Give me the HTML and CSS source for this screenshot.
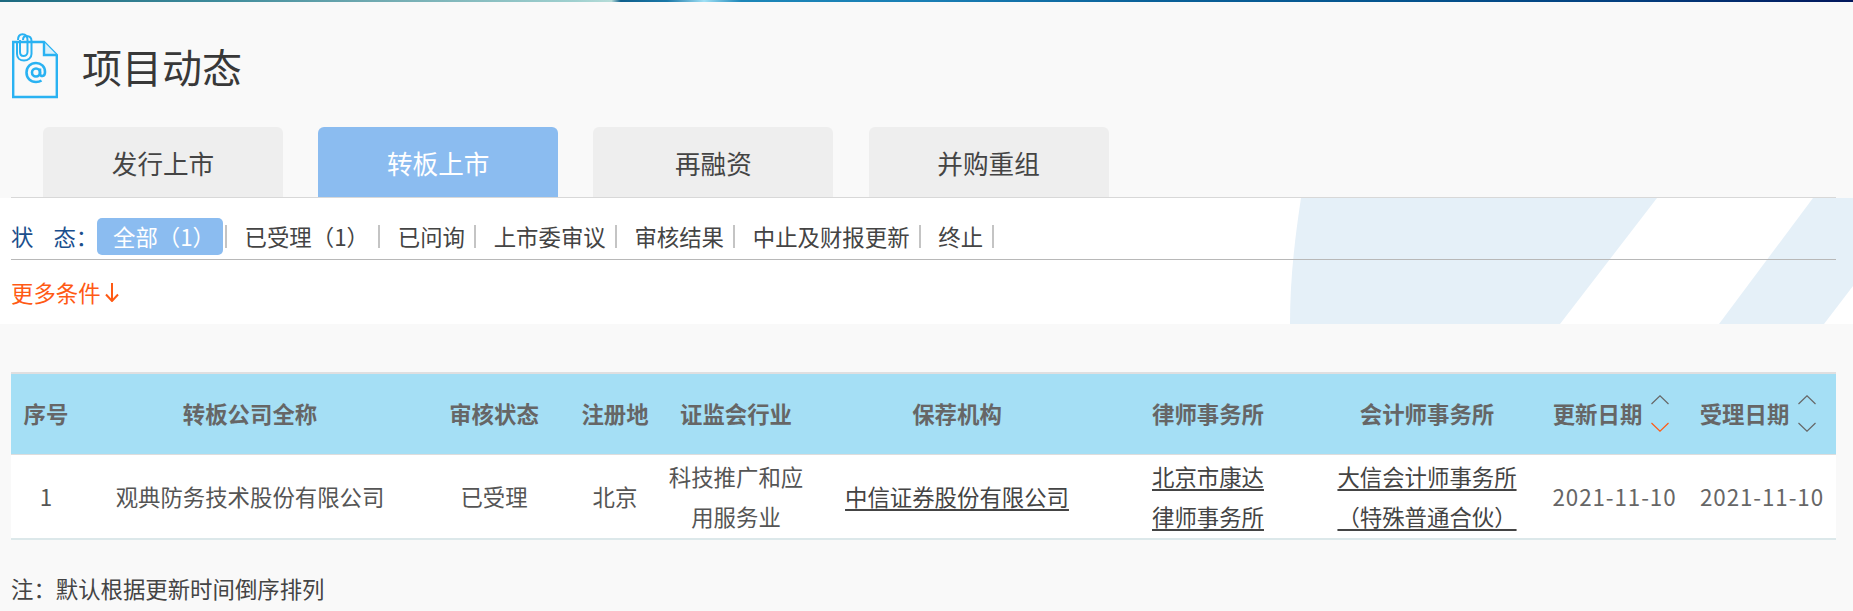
FILE: index.html
```html
<!DOCTYPE html>
<html lang="zh-CN">
<head>
<meta charset="utf-8">
<title>项目动态</title>
<link rel="stylesheet" href="styles.css">
</head>
<body>
<div class="strip"></div>
<header class="head">
  <svg class="head-icon" width="46" height="66" viewBox="0 0 46 66" fill="none" stroke="#29b2f2" stroke-width="2.400">
    <path d="M1.200 9H32L44.800 22V64H1.200Z"/>
    <path d="M32 9V22H44.800" fill="#d9f0fb"/>
    <path d="M6 7C6 3 8 1.200 10.500 1.200C13.500 1.200 15.500 3 15.500 7V19C15.500 21.500 13.500 23 11.500 23C9.500 23 8 21.500 8 19V7" stroke-width="2"/>
    <path d="M11 7C11 4 13 3 14.500 3C17.500 3 19.500 5 19.500 8V21C19.500 25 16 27.500 12 27.500C8 27.500 5 25 5 21V9" stroke-width="2"/>
    <circle cx="24" cy="39.500" r="4" stroke-width="2.600"/>
    <path d="M28 35.500V40.500C28 44 33 44 33 39C33 33.500 29 30 24 30C18.500 30 14.500 34 14.500 39.500C14.500 45 18.500 49 24 49C26 49 28 48.500 29.500 47.500" stroke-width="2.600"/>
  </svg>
  <h1 class="title">项目动态</h1>
</header>
<nav class="tabs">
  <a class="tab">发行上市</a>
  <a class="tab tab-active">转板上市</a>
  <a class="tab">再融资</a>
  <a class="tab">并购重组</a>
</nav>
<section class="panel">
  <svg class="panel-art" width="563" height="126" viewBox="0 0 563 126">
    <path d="M11 0H367L270 126H0C0 80 5 40 11 0Z" fill="#e5f0f8"/>
    <path d="M523 0H563V88L534 126H429Z" fill="#e5f0f8"/>
  </svg>
  <div class="status-row">
    <span class="status-label">状<span class="status-gap"></span>态：</span>
    <a class="pill">全部（1）</a><i class="sep"></i>
    <a class="status">已受理（1）</a><i class="sep"></i>
    <a class="status">已问询</a><i class="sep"></i>
    <a class="status">上市委审议</a><i class="sep"></i>
    <a class="status">审核结果</a><i class="sep"></i>
    <a class="status">中止及财报更新</a><i class="sep"></i>
    <a class="status">终止</a><i class="sep"></i>
  </div>
  <div class="more">更多条件<svg class="more-arrow" width="14" height="19" viewBox="0 0 14 19" fill="none" stroke="#ff5a14" stroke-width="2"><path d="M7 0V18M1 11.500L7 18L13 11.500"/></svg></div>
</section>
<table class="grid">
  <thead>
    <tr>
      <th class="c1">序号</th>
      <th class="c2">转板公司全称</th>
      <th class="c3">审核状态</th>
      <th class="c4">注册地</th>
      <th class="c5">证监会行业</th>
      <th class="c6">保荐机构</th>
      <th class="c7">律师事务所</th>
      <th class="c8">会计师事务所</th>
      <th class="c9"><span class="sort-head">更新日期<svg class="sort" width="18" height="37" viewBox="0 0 18 37" fill="none" stroke-width="1.200"><path d="M0.500 9L9 0.800L17.500 9" stroke="#666"/><path d="M0.500 28L9 36.200L17.500 28" stroke="#ff5a14"/></svg></span></th>
      <th class="c10"><span class="sort-head">受理日期<svg class="sort" width="18" height="37" viewBox="0 0 18 37" fill="none" stroke-width="1.200"><path d="M0.500 9L9 0.800L17.500 9" stroke="#666"/><path d="M0.500 28L9 36.200L17.500 28" stroke="#666"/></svg></span></th>
    </tr>
  </thead>
  <tbody>
    <tr>
      <td>1</td>
      <td>观典防务技术股份有限公司</td>
      <td>已受理</td>
      <td>北京</td>
      <td>科技推广和应<br>用服务业</td>
      <td><a class="link">中信证券股份有限公司</a></td>
      <td><a class="link">北京市康达<br>律师事务所</a></td>
      <td><a class="link">大信会计师事务所<br>（特殊普通合伙）</a></td>
      <td class="date">2021-11-10</td>
      <td class="date">2021-11-10</td>
    </tr>
  </tbody>
</table>
<p class="note">注：默认根据更新时间倒序排列</p>
</body>
</html>
```

FILE: styles.css
```css
* { box-sizing: border-box; }
html, body { margin: 0; padding: 0; height: 611px; overflow: hidden; }
body {
  background: #f9f9f9;
  color: #444;
  font-family: "Noto Sans CJK SC", "Liberation Sans", sans-serif;
  font-size: 22.4px;
}
.strip {
  height: 2px;
  background: linear-gradient(90deg, #1d6a80 0, #3f8c9c 12%, #6fa9b0 20%, #9fd0cf 31%, #b5dcd8 33%, #0f5f8c 33.5%, #1a78a8 36%, #9fe0f5 38%, #1c86b8 40%, #1a7fb5 50%, #0a6199 62%, #05558f 75%, #033f7f 88%, #02175c 100%);
}
.head {
  display: flex;
  align-items: flex-start;
  height: 125px;
  padding: 31px 0 0 12px;
}
.head-icon { display: block; flex: none; }
.title {
  margin: 5px 0 0 24px;
  font-size: 40px;
  font-weight: 400;
  line-height: 56px;
  color: #383838;
}
.tabs {
  display: flex;
  gap: 35.2px;
  height: 71px;
  margin: 0 17px 0 11px;
  padding-left: 32px;
  border-bottom: 1px solid #d8d8d8;
}
.tab {
  width: 240px;
  height: 70px;
  border-radius: 6px 6px 0 0;
  background: #eee;
  color: #444;
  font-size: 25.600px;
  line-height: 72px;
  text-align: center;
}
.tab-active { background: #8bbcf0; color: #fff; }
.panel {
  position: relative;
  height: 126px;
  background: #fff;
  overflow: hidden;
}
.panel-art { position: absolute; top: 0; right: 0; display: block; }
.status-row {
  position: relative;
  display: flex;
  align-items: center;
  height: 62px;
  margin: 0 17px 0 11px;
  padding-top: 20px;
  padding-bottom: 4px;
  border-bottom: 1px solid #b8b8b8;
  line-height: 37px;
}
.status-label { width: 86px; color: #1c4f8c; white-space: nowrap; }
.status-gap { display: inline-block; width: 20px; }
.pill {
  width: 126px;
  height: 37px;
  padding-left: 16px;
  border-radius: 5px;
  background: #8bbcf0;
  color: #fff;
  white-space: nowrap;
  margin-right: 2px;
}
.sep { flex: none; width: 2px; height: 23px; background: #c4c4c4; }
.status { margin: 0 9.200px 0 17.600px; color: #444; white-space: nowrap; }
.more {
  position: relative;
  display: flex;
  align-items: center;
  height: 40px;
  margin: 12px 0 0 11px;
  color: #ff5a14;
  line-height: 40px;
}
.more-arrow { display: block; margin-left: 4px; }
.grid {
  width: 1825px;
  margin: 48px 0 0 11px;
  border-collapse: collapse;
  table-layout: fixed;
  background: #fff;
}
.grid th {
  height: 81px;
  padding: 0 0 2px;
  background: #a5dff5;
  border-top: 2px solid #e0dfe0;
  border-bottom: 1px solid #ddd;
  color: #666;
  font-weight: 700;
  font-size: 22.4px;
  text-align: center;
}
.grid td {
  height: 85px;
  padding: 0;
  border-bottom: 2px solid #dce8ea;
  color: #555;
  line-height: 40px;
  text-align: center;
}
.c1 { width: 70px; }
.c2 { width: 338px; }
.c3 { width: 150px; }
.c4 { width: 92px; }
.c5 { width: 150px; }
.c6 { width: 292px; }
.c7 { width: 210px; }
.c8 { width: 228px; }
.c9 { width: 147px; }
.c10 { width: 148px; }
.sort-head { display: inline-flex; align-items: center; gap: 9px; }
.c9 .sort-head { margin-right: 7px; }
.c10 .sort-head { margin-right: 8px; }
.sort { display: block; flex: none; margin-top: 2px; }
.link {
  color: #444;
  text-decoration: underline;
  text-decoration-thickness: 2px;
  text-underline-offset: 3px;
}
.grid .date { color: #666; letter-spacing: 0.9px; white-space: nowrap; }
.note {
  margin: 33px 0 0 11px;
  line-height: 30px;
  color: #444;
}
```
